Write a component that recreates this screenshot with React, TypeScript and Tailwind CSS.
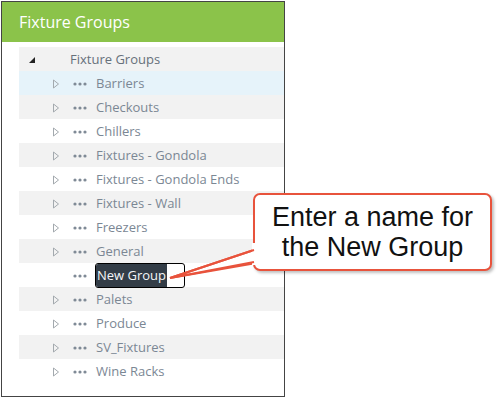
import { ReactNode } from "react";

const GROUPS = [
  "Barriers",
  "Checkouts",
  "Chillers",
  "Fixtures - Gondola",
  "Fixtures - Gondola Ends",
  "Fixtures - Wall",
  "Freezers",
  "General",
  "__edit__",
  "Palets",
  "Produce",
  "SV_Fixtures",
  "Wine Racks",
];

function Expander() {
  return (
    <svg width="8" height="10" viewBox="0 0 8 10" className="shrink-0">
      <polygon points="1.5,1 6.5,5 1.5,9" fill="none" stroke="#a3a9ae" strokeWidth="1" />
    </svg>
  );
}

function Dots() {
  return (
    <svg width="14" height="4" viewBox="0 0 14 4" className="shrink-0">
      <circle cx="2" cy="2" r="1.6" fill="#7f8a96" />
      <circle cx="7" cy="2" r="1.6" fill="#7f8a96" />
      <circle cx="12" cy="2" r="1.6" fill="#7f8a96" />
    </svg>
  );
}

function Row({ index, children }: { index: number; children: ReactNode }) {
  const bg = index === 1 ? "bg-[#e6f3fa]" : index % 2 === 0 ? "bg-[#f2f2f2]" : "bg-white";
  return <div className={`flex h-6 items-center pt-px ${bg}`}>{children}</div>;
}

export default function App() {
  return (
    <div className="relative h-[398px] w-[498px] bg-white pl-px pt-px font-['Open_Sans',sans-serif]">
      <div className="flex h-[396px] w-[284px] flex-col border border-[#444]">
        <div className="flex h-10 items-center bg-[#8bc34a] pl-[17px] text-[16px] text-white">
          Fixture Groups
        </div>
        <div className="mt-[5px] pl-[17px] text-[13px] text-[#7b8794]">
          <Row index={0}>
            <svg width="8" height="8" viewBox="0 0 8 8" className="ml-[9px] shrink-0">
              <polygon points="7,1 7,7 1,7" fill="#222" />
            </svg>
            <span className="ml-[34px] text-[#66707a]">Fixture Groups</span>
          </Row>
          {GROUPS.map((name, i) => (
            <Row key={name} index={i + 1}>
              {name === "__edit__" ? (
                <span className="ml-[33px] w-[8px]" />
              ) : (
                <span className="ml-[33px]">
                  <Expander />
                </span>
              )}
              <span className="ml-[13px]">
                <Dots />
              </span>
              {name === "__edit__" ? (
                <div className="ml-[8px] flex h-[25px] w-[90px] items-center overflow-hidden rounded-[3px] border border-black bg-white">
                  <span className="flex h-full items-center bg-[#333d47] pl-[1px] pr-[1px] text-[#f4f6f8]">
                    New Group
                  </span>
                </div>
              ) : (
                <span className="ml-[9px]">{name}</span>
              )}
            </Row>
          ))}
        </div>
      </div>

      <svg width="100" height="60" viewBox="0 0 100 60" className="absolute left-[165px] top-[235px]">
        <polygon points="5,43 92,14 92,28" fill="white" stroke="#e8533c" strokeWidth="2" strokeLinejoin="miter" />
      </svg>
      <div className="absolute left-[253px] top-[193px] flex h-[78px] w-[239px] flex-col items-center justify-center rounded-[7px] border-2 border-[#e8533c] bg-white font-['Liberation_Sans',Arial,sans-serif] text-[27px] leading-[30px] text-[#111] shadow-[2px_2px_3px_rgba(0,0,0,0.25)]">
        <span>Enter a name for</span>
        <span>the New Group</span>
      </div>
      <div className="absolute left-[252px] top-[243px] h-[22px] w-[4px] bg-white" />
      <svg width="100" height="60" viewBox="0 0 100 60" className="absolute left-[165px] top-[235px]">
        <polyline points="89,15 5,43 89,27" fill="none" stroke="#e8533c" strokeWidth="2" />
      </svg>
    </div>
  );
}
